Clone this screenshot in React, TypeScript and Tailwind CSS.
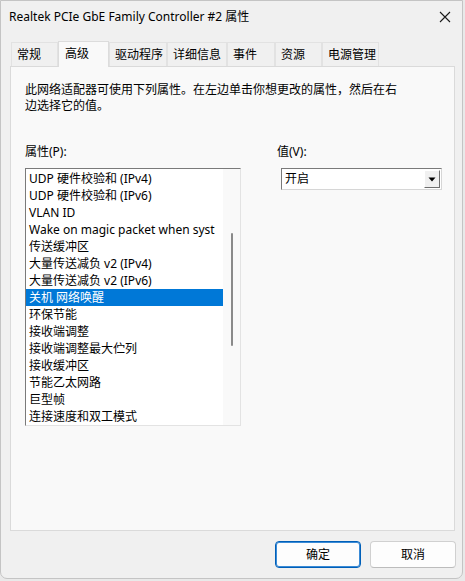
const tabs = [
  { label: "常规", w: 47 },
  { label: "高级", w: 51, active: true },
  { label: "驱动程序", w: 58 },
  { label: "详细信息", w: 60 },
  { label: "事件", w: 48 },
  { label: "资源", w: 47 },
  { label: "电源管理", w: 57 },
]

const items = [
  "UDP 硬件校验和 (IPv4)",
  "UDP 硬件校验和 (IPv6)",
  "VLAN ID",
  "Wake on magic packet when syst",
  "传送缓冲区",
  "大量传送减负 v2 (IPv4)",
  "大量传送减负 v2 (IPv6)",
  "关机 网络唤醒",
  "环保节能",
  "接收端调整",
  "接收端调整最大伫列",
  "接收缓冲区",
  "节能乙太网路",
  "巨型帧",
  "连接速度和双工模式",
]

const font = "font-['Segoe_UI','Noto_Sans','Noto_Sans_CJK_SC',sans-serif]"

export default function App() {
  return (
    <div className={`w-[465px] h-[581px] bg-[#e9e9e9] overflow-hidden ${font} text-[12px] text-black`}>
      <div className="w-[463px] h-[579px] bg-[#f0f0f0] border border-[#c4c4c4] rounded-b-[7px] flex flex-col">
        {/* title bar */}
        <div className="h-[31px] flex items-center justify-between pl-[8px] pr-[8px]">
          <span className="text-[12px] leading-none">Realtek PCIe GbE Family Controller #2 属性</span>
          <svg width="14" height="14" viewBox="0 0 14 14" className="mr-[2px]">
            <path d="M2 2 L12 12 M12 2 L2 12" stroke="#1a1a1a" strokeWidth="1.1" />
          </svg>
        </div>

        {/* tabs */}
        <div className="mt-[8px] ml-[10px] flex items-end h-[26px]">
          {tabs.map((t) =>
            t.active ? (
              <div
                key={t.label}
                className="h-[26px] -mb-px z-10 bg-[#f9f9f9] border border-b-0 border-[#dcdcdc] flex items-start pt-[3px] pl-[6px]"
                style={{ width: t.w }}
              >
                {t.label}
              </div>
            ) : (
              <div
                key={t.label}
                className="h-[24px] bg-[#f0f0f0] border border-b-0 border-[#e2e2e2] flex items-center pl-[5px]"
                style={{ width: t.w }}
              >
                {t.label}
              </div>
            )
          )}
        </div>

        {/* panel */}
        <div className="ml-[9px] w-[445px] h-[465px] bg-[#f9f9f9] border border-[#dadada] pt-[15px] pl-[14px] pr-[14px]">
          <p className="leading-[16px] w-[380px]">
            此网络适配器可使用下列属性。在左边单击你想更改的属性，然后在右边选择它的值。
          </p>

          <div className="mt-[30px] flex">
            <div className="w-[216px]">
              <div className="leading-[16px] mb-[8px]">属性(P):</div>
              <div className="h-[258px] bg-white border-t border-l border-[#7a7a7a] border-r border-b border-r-[#e3e3e3] border-b-[#e3e3e3] flex">
                <div className="w-[197px] overflow-hidden pt-[1px]">
                  {items.map((it, i) => (
                    <div
                      key={it}
                      className={`h-[17px] leading-[17px] pl-[3px] whitespace-nowrap ${
                        i === 7 ? "bg-[#0078d7] text-white" : ""
                      }`}
                    >
                      {it}
                    </div>
                  ))}
                </div>
                <div className="w-[17px] bg-[#f9f9f9] flex justify-center">
                  <div className="mt-[64px] w-[2px] h-[113px] bg-[#8a8a8a] rounded-full" />
                </div>
              </div>
            </div>

            <div className="ml-[36px] flex-1">
              <div className="leading-[16px] mb-[8px]">值(V):</div>
              <div className="ml-[4px] w-[161px] h-[22px] bg-white border-t border-l border-[#7a7a7a] border-r border-b border-r-[#d6d6d6] border-b-[#d6d6d6] flex items-center justify-between pl-[3px] pr-[1px]">
                <span>开启</span>
                <div className="w-[16px] h-[18px] bg-[#f0f0f0] border-t border-l border-white border-r border-b border-r-[#6e6e6e] border-b-[#6e6e6e] flex items-center justify-center">
                  <svg width="8" height="5" viewBox="0 0 8 5">
                    <path d="M0.5 0.5 H7.5 L4 4.5 Z" fill="#000" />
                  </svg>
                </div>
              </div>
            </div>
          </div>
        </div>

        {/* buttons */}
        <div className="mt-[10px] flex justify-end gap-[9px] pr-[6px]">
          <button className="w-[86px] h-[27px] bg-[#fdfdfd] border border-[#005fb8] rounded-[4px] shadow-[inset_0_0_0_1px_#3b8bd6] text-[12px]">
            确定
          </button>
          <button className="w-[86px] h-[27px] bg-[#fdfdfd] border border-[#d0d0d0] border-b-[#bcbcbc] rounded-[4px] text-[12px]">
            取消
          </button>
        </div>
      </div>
    </div>
  )
}
